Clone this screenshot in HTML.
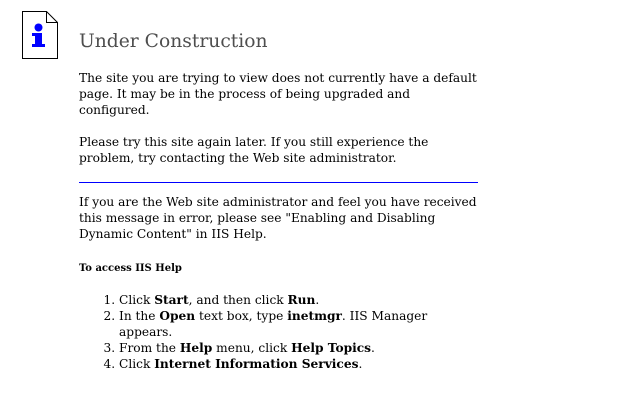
<!DOCTYPE html>
<html><head><meta charset="utf-8"><style>
body{margin:0;background:#fff;font-family:"DejaVu Serif",serif;color:#000;width:630px;height:405px;overflow:hidden;position:relative}
.a{position:absolute;left:79px;width:400px;font-size:12.2px;line-height:16px;margin:0}
h1{position:absolute;left:79px;top:30px;margin:0;font-size:18.7px;font-weight:normal;color:#4e4e4e;line-height:24px}
.hr{position:absolute;left:79px;top:182px;width:399px;height:1px;background:#00f}
h5{position:absolute;left:79px;top:263px;margin:0;font-size:10px;line-height:12px;font-weight:bold}
ol{position:absolute;left:79px;top:292px;margin:0;padding-left:40px;width:355px;font-size:12.2px;line-height:16px}
</style></head><body>
<svg style="position:absolute;left:22px;top:11px" width="37" height="48" viewBox="0 0 37 48">
<path d="M0.5 0.5H24.5L35.5 11.5V47.5H0.5Z" fill="#fff" stroke="#000"/>
<path d="M24.5 0.5V11.5H35.5" fill="none" stroke="#000"/>
<circle cx="16.5" cy="16.5" r="4" fill="#00f"/>
<path d="M10 22H20V33H23V36H10V33H13V25H10Z" fill="#00f"/>
</svg>
<h1>Under Construction</h1>
<p class="a" style="top:70px">The site you are trying to view does not currently have a default page. It may be in the process of being upgraded and configured.</p>
<p class="a" style="top:134px">Please try this site again later. If you still experience the problem, try contacting the Web site administrator.</p>
<div class="hr"></div>
<p class="a" style="top:194px">If you are the Web site administrator and feel you have received this message in error, please see "Enabling and Disabling Dynamic Content" in IIS Help.</p>
<h5>To access IIS Help</h5>
<ol>
<li>Click <b>Start</b>, and then click <b>Run</b>.</li>
<li>In the <b>Open</b> text box, type <b>inetmgr</b>. IIS Manager appears.</li>
<li>From the <b>Help</b> menu, click <b>Help Topics</b>.</li>
<li>Click <b>Internet Information Services</b>.</li>
</ol>
</body></html>
